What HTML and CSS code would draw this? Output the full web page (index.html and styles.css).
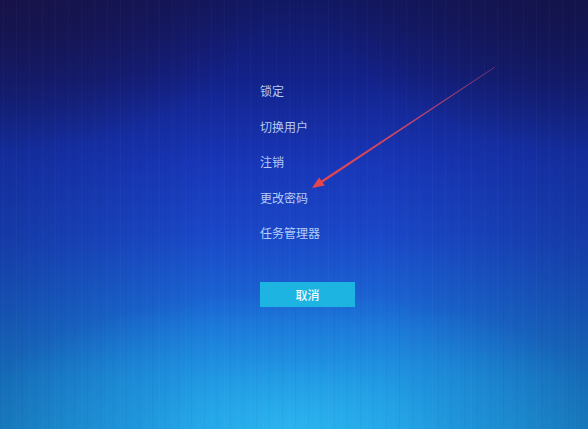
FILE: index.html
```html
<!DOCTYPE html>
<html lang="zh-CN">
<head>
<meta charset="utf-8">
<title>安全选项</title>
<link rel="stylesheet" href="styles.css">
</head>
<body>
<div class="screen">
  <div class="stripes"></div>
  <nav class="menu">
    <ul class="options">
      <li class="option">锁定</li>
      <li class="option">切换用户</li>
      <li class="option">注销</li>
      <li class="option">更改密码</li>
      <li class="option">任务管理器</li>
    </ul>
    <button class="cancel" type="button">取消</button>
  </nav>
  <svg class="arrow" width="588" height="429" viewBox="0 0 588 429" aria-hidden="true">
    <defs>
      <linearGradient id="ag" x1="495" y1="67" x2="312" y2="188" gradientUnits="userSpaceOnUse">
        <stop offset="0" stop-color="#c84a78" stop-opacity="0.55"/>
        <stop offset="0.5" stop-color="#dc4858" stop-opacity="0.9"/>
        <stop offset="1" stop-color="#e8454c"/>
      </linearGradient>
    </defs>
    <polygon fill="url(#ag)" points="495.2,67.3 322.7,182.4 324.8,185.4 312,188 319.2,177.4 321.3,180.4 494.8,66.7"/>
  </svg>
</div>
</body>
</html>
```
FILE: styles.css
```css
html, body {
  margin: 0;
  padding: 0;
}
body {
  width: 588px;
  height: 429px;
  overflow: hidden;
  font-family: "Noto Sans CJK SC", "Noto Sans", sans-serif;
}
.screen {
  position: relative;
  width: 588px;
  height: 429px;
  overflow: hidden;
  background:
    radial-gradient(ellipse 55% 32% at 50% 100%, rgba(50, 190, 245, 0.7) 0%, rgba(40, 165, 235, 0.35) 50%, rgba(30, 140, 230, 0) 100%),
    linear-gradient(to right, rgba(10, 25, 90, 0.3) 0%, rgba(10, 25, 90, 0) 35%, rgba(10, 25, 90, 0) 65%, rgba(10, 25, 90, 0.3) 100%),
    radial-gradient(ellipse 45% 35% at 0% 0%, rgba(30, 15, 60, 0.85) 0%, rgba(30, 15, 60, 0) 100%),
    radial-gradient(ellipse 45% 35% at 100% 0%, rgba(25, 15, 60, 0.8) 0%, rgba(25, 15, 60, 0) 100%),
    linear-gradient(to bottom, #111862 0%, #13228a 18%, #1836b8 38%, #1a48c8 55%, #1a68d4 72%, #1a8cdc 88%, #1c9ce0 100%);
}
.stripes {
  position: absolute;
  inset: 0;
  background:
    repeating-linear-gradient(to right,
      rgba(255, 255, 255, 0) 0px,
      rgba(255, 255, 255, 0) 3px,
      rgba(255, 255, 255, 0.025) 3px,
      rgba(255, 255, 255, 0.025) 4px,
      rgba(255, 255, 255, 0) 4px,
      rgba(255, 255, 255, 0) 9px,
      rgba(0, 0, 40, 0.04) 9px,
      rgba(0, 0, 40, 0.04) 10px,
      rgba(255, 255, 255, 0) 10px,
      rgba(255, 255, 255, 0) 13px);
  pointer-events: none;
}
.menu {
  position: relative;
  display: flex;
  flex-direction: column;
  align-items: flex-start;
  padding: 84px 0 0 260px;
}
.options {
  list-style: none;
  margin: 0;
  padding: 0;
  display: flex;
  flex-direction: column;
  gap: 21.5px;
}
.option {
  font-size: 12px;
  line-height: 14px;
  height: 14px;
  color: rgba(205, 225, 255, 0.88);
  white-space: nowrap;
}
.cancel {
  margin-top: 42px;
  width: 95px;
  height: 25px;
  border: 0;
  padding: 0;
  background: #1eb4e2;
  color: #eef8ff;
  font-family: "Noto Sans CJK SC", "Noto Sans", sans-serif;
  font-size: 12px;
  font-weight: 500;
  line-height: 25px;
  text-align: center;
}
.arrow {
  position: absolute;
  left: 0;
  top: 0;
  pointer-events: none;
}
```
